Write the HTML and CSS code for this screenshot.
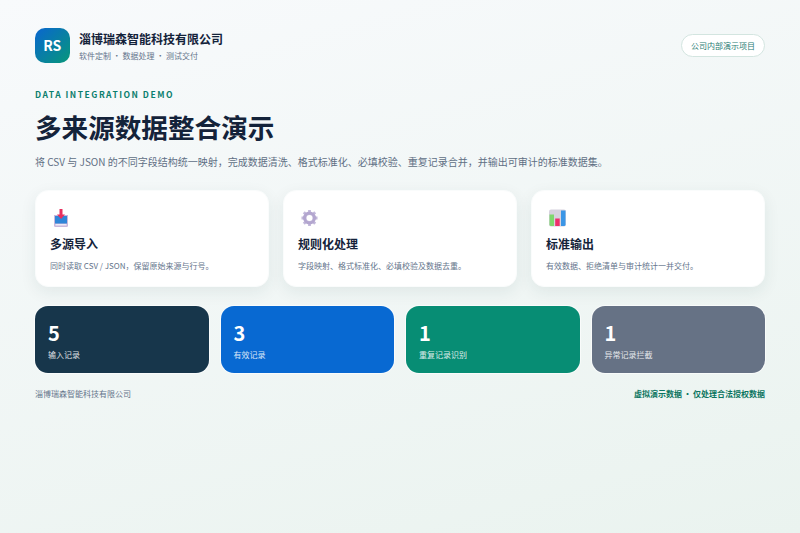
FILE: index.html
```html
<!DOCTYPE html>
<html>
	<head>
		<meta charset="UTF-8">
		<title>多来源数据整合演示</title>
		<link rel="stylesheet" href="styles.css">
	</head>
	<body>
		<div id="wrap">
			<div class="top">
				<div class="brand">
					<div class="logo">RS</div>
					<div>
						<div class="name">淄博瑞森智能科技有限公司</div>
						<div class="sub">软件定制<i>·</i>数据处理<i>·</i>测试交付</div>
					</div>
				</div>
				<div class="tag">公司内部演示项目</div>
			</div>
			<div class="eyebrow">DATA INTEGRATION DEMO</div>
			<h1>多来源数据整合演示</h1>
			<p class="lead">将 CSV 与 JSON 的不同字段结构统一映射，完成数据清洗、格式标准化、必填校验、重复记录合并，并输出可审计的标准数据集。</p>
			<div class="cards">
				<div class="card">
					<svg class="ico" viewBox="0 0 18 18">
						<path d="M1 6h14v10.500a1.500 1.500 0 0 1-1.500 1.500h-11A1.500 1.500 0 0 1 1 16.500z" fill="#c9b8dc"/>
						<path d="M2.500 15h11v1.500h-11z" fill="#efe8f5"/>
						<path d="M2 7h4l2 1.500L10 7h4v7.500H2z" fill="#2f86d8"/>
						<path d="M6.500 0h3v5.500H12L8 10 4 5.500h2.500z" fill="#e8305f"/>
					</svg>
					<h3>多源导入</h3>
					<p>同时读取 CSV / JSON，保留原始来源与行号。</p>
				</div>
				<div class="card">
					<svg class="ico" viewBox="0 0 18 18">
						<path d="M8.500 1v16M0.500 9h16M2.800 3.300l11.400 11.400M14.200 3.300L2.800 14.700" stroke="#c2b8da" stroke-width="2.800"/>
						<circle cx="8.500" cy="9" r="5" fill="none" stroke="#b3a6cf" stroke-width="3"/>
						<circle cx="8.500" cy="9" r="3" fill="#fff"/>
					</svg>
					<h3>规则化处理</h3>
					<p>字段映射、格式标准化、必填校验及数据去重。</p>
				</div>
				<div class="card">
					<svg class="ico" viewBox="0 0 18 18">
						<rect x="0" y="0.500" width="17" height="17" rx="2" fill="#d6d2de"/>
						<path d="M0.500 5.500h4.500v11.500H2a1.500 1.500 0 0 1-1.500-1.500z" fill="#7fd86e"/>
						<path d="M6.200 9.500h4.500V17H6.200z" fill="#ee2f6b"/>
						<path d="M12 1.500h4.500v14a1.500 1.500 0 0 1-1.500 1.500h-3z" fill="#3a96e6"/>
					</svg>
					<h3>标准输出</h3>
					<p>有效数据、拒绝清单与审计统计一并交付。</p>
				</div>
			</div>
			<div class="stats">
				<div class="stat navy"><b>5</b><span>输入记录</span></div>
				<div class="stat blue"><b>3</b><span>有效记录</span></div>
				<div class="stat green"><b>1</b><span>重复记录识别</span></div>
				<div class="stat gray"><b>1</b><span>异常记录拦截</span></div>
			</div>
			<div class="foot">
				<span>淄博瑞森智能科技有限公司</span>
				<strong>虚拟演示数据<i>·</i>仅处理合法授权数据</strong>
			</div>
		</div>
	</body>
</html>
```
FILE: styles.css
```css
*{
	margin:0px;
	padding:0px;
	box-sizing:border-box;
}
html,body{
	height:100%;
}
body{
	font-family:"Noto Sans CJK SC","Noto Sans",sans-serif;
	background:linear-gradient(165deg,#f8fafc 0%,#eaf3ef 100%);
	color:#14233a;
}
i{
	font-style:normal;
}
#wrap{
	padding:28px 35px 0;
}
.top{
	display:flex;
	justify-content:space-between;
	align-items:center;
}
.brand{
	display:flex;
	align-items:center;
	gap:9.500px;
}
.logo{
	width:34.500px;
	height:35px;
	border-radius:10px;
	background:linear-gradient(135deg,#0a66d0,#07977a);
	color:#fff;
	font-size:14px;
	font-weight:700;
	line-height:35px;
	text-align:center;
}
.name{
	font-size:12px;
	font-weight:700;
	line-height:17px;
}
.sub{
	font-size:8px;
	line-height:13px;
	margin-top:2px;
	color:#64748b;
}
.sub i{
	display:inline-block;
	width:11.500px;
	text-align:center;
}
.tag{
	height:23.500px;
	line-height:21.500px;
	padding:0 9px;
	border:1px solid #d3e5e0;
	border-radius:12px;
	background:#fff;
	font-size:8px;
	color:#2a7c74;
}
.eyebrow{
	margin-top:25px;
	font-size:8.500px;
	line-height:12px;
	font-weight:700;
	letter-spacing:1.500px;
	color:#0b7f6e;
}
h1{
	margin-top:7px;
	font-size:26.600px;
	line-height:40px;
	font-weight:700;
}
.lead{
	margin-top:7px;
	font-size:10px;
	line-height:16px;
	color:#5f6f84;
}
.cards{
	display:grid;
	grid-template-columns:repeat(3,1fr);
	gap:14px;
	margin-top:20px;
}
.card{
	height:97px;
	padding:18px 14px 0;
	background:#fff;
	border:1px solid #fafcfc;
	border-radius:13px;
	box-shadow:0 5px 16px rgba(20,60,70,0.08);
}
.ico{
	display:block;
	width:18px;
	height:18px;
	margin-left:3px;
}
.card h3{
	margin-top:7px;
	font-size:12px;
	line-height:20px;
	font-weight:700;
}
.card p{
	margin-top:5px;
	font-size:8px;
	line-height:13px;
	color:#64748b;
}
.stats{
	display:grid;
	grid-template-columns:repeat(4,1fr);
	gap:12px;
	margin-top:19px;
}
.stat{
	height:67px;
	padding:13px 13px 0;
	border-radius:13px;
	color:#fff;
	box-shadow:0 0 0 1px rgba(255,255,255,0.6);
}
.stat b{
	display:block;
	font-size:20px;
	line-height:27px;
}
.stat span{
	display:block;
	margin-top:2px;
	font-size:8px;
	line-height:13px;
	opacity:0.85;
}
.navy{background:#17364b;}
.blue{background:#0869d2;}
.green{background:#078d74;}
.gray{background:#667285;}
.foot{
	display:flex;
	justify-content:space-between;
	margin-top:14px;
	font-size:8px;
	line-height:13px;
	color:#64748b;
}
.foot strong{
	color:#0b7560;
}
.foot i{
	display:inline-block;
	width:11px;
	text-align:center;
}
```
